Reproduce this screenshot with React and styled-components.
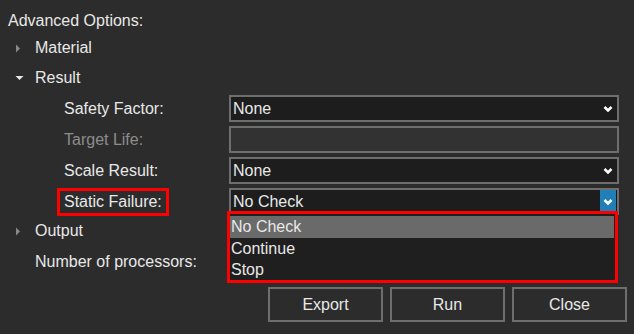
import React from 'react';
import styled, { createGlobalStyle } from 'styled-components';

const GlobalStyle = createGlobalStyle`
  html, body {
    margin: 0;
    background: #2c2c2c;
  }
  body {
    font-family: "Liberation Sans", Arial, sans-serif;
    font-size: 16px;
    color: #e8e8e8;
  }
`;

const Panel = styled.div`
  width: 634px;
  height: 334px;
  box-sizing: border-box;
  padding: 9px 0 0 8px;
  background: #2c2c2c;
  display: flex;
  flex-direction: column;
  overflow: hidden;
`;

const Heading = styled.div`
  height: 24px;
  line-height: 24px;
`;

const TreeRow = styled.div`
  height: ${p => p.$h || 30}px;
  margin-top: ${p => p.$gap || 0}px;
  display: flex;
  align-items: center;
`;

const Expander = styled.span`
  width: 20px;
  padding-left: 7px;
  display: flex;
  align-items: center;
`;

const TreeLabel = styled.span`
  line-height: 20px;
`;

const FieldRow = styled.div`
  height: 31px;
  display: grid;
  grid-template-columns: 221px 390px;
  align-items: center;
`;

const FieldLabel = styled.span`
  padding-left: 56px;
  color: ${p => (p.$disabled ? '#8c8c8c' : '#e8e8e8')};
  line-height: 22px;
`;

const Marked = styled.span`
  justify-self: start;
  margin-left: 49px;
  border: 3px solid #ff0000;
  padding: 0 4px;
  line-height: 22px;
`;

const ComboWrap = styled.div`
  position: relative;
  width: 390px;
  height: 27px;
`;

const Field = styled.div`
  height: 27px;
  box-sizing: border-box;
  border: 2px solid #6e6e6e;
  background: ${p => (p.$disabled ? '#323232' : '#1d1d1d')};
  display: flex;
  align-items: center;
  padding-left: 2px;
`;

const Value = styled.span`
  flex: 1;
  line-height: 20px;
`;

const Arrow = styled.span`
  width: 16px;
  align-self: stretch;
  display: flex;
  align-items: center;
  justify-content: center;
  margin-right: 1px;
  background: ${p => (p.$active ? '#1f7fb6' : 'transparent')};
`;

const List = styled.div`
  position: absolute;
  left: -2px;
  top: 23px;
  width: 391px;
  height: 72px;
  box-sizing: border-box;
  border: 3px solid #ff0000;
  background: #1f1f1f;
  padding-top: 2px;
  z-index: 2;
`;

const Option = styled.div`
  height: 21.5px;
  line-height: 21px;
  padding-left: 1px;
  margin-right: 1px;
  background: ${p => (p.$selected ? '#6a6a6a' : 'transparent')};
`;

const Buttons = styled.div`
  margin-top: 10px;
  display: flex;
  justify-content: flex-end;
  gap: 7px;
  padding-right: 7px;
`;

const Button = styled.button`
  width: 115px;
  height: 35px;
  box-sizing: border-box;
  border: 2px solid #6e6e6e;
  background: #2c2c2c;
  color: #e8e8e8;
  font-family: inherit;
  font-size: 16px;
`;

const Chevron = () => (
  <svg width="10" height="8" viewBox="0 0 10 8">
    <polyline points="1.5,2 5,5.5 8.5,2" fill="none" stroke="#ffffff" strokeWidth="2.6" />
  </svg>
);

const Right = () => (
  <svg width="6" height="9" viewBox="0 0 6 9">
    <polygon points="1,0.5 5,4.5 1,8.5" fill="#8a8a8a" />
  </svg>
);

const Down = () => (
  <svg width="9" height="6" viewBox="0 0 9 6">
    <polygon points="0.5,1 8.5,1 4.5,5" fill="#e8e8e8" />
  </svg>
);

const Combo = ({ value, active, options }) => (
  <ComboWrap>
    <Field>
      <Value>{value}</Value>
      <Arrow $active={active}><Chevron /></Arrow>
    </Field>
    {options && (
      <List>
        {options.map(o => (
          <Option key={o} $selected={o === value}>{o}</Option>
        ))}
      </List>
    )}
  </ComboWrap>
);

export default function App() {
  return (
    <Panel>
      <GlobalStyle />
      <Heading>Advanced Options:</Heading>
      <TreeRow><Expander><Right /></Expander><TreeLabel>Material</TreeLabel></TreeRow>
      <TreeRow><Expander><Down /></Expander><TreeLabel>Result</TreeLabel></TreeRow>
      <FieldRow>
        <FieldLabel>Safety Factor:</FieldLabel>
        <Combo value="None" />
      </FieldRow>
      <FieldRow>
        <FieldLabel $disabled>Target Life:</FieldLabel>
        <Field $disabled />
      </FieldRow>
      <FieldRow>
        <FieldLabel>Scale Result:</FieldLabel>
        <Combo value="None" />
      </FieldRow>
      <FieldRow>
        <Marked>Static Failure:</Marked>
        <Combo value="No Check" active options={['No Check', 'Continue', 'Stop']} />
      </FieldRow>
      <TreeRow $h={28}><Expander><Right /></Expander><TreeLabel>Output</TreeLabel></TreeRow>
      <TreeRow $gap={2}><Expander /><TreeLabel>Number of processors:</TreeLabel></TreeRow>
      <Buttons>
        <Button>Export</Button>
        <Button>Run</Button>
        <Button>Close</Button>
      </Buttons>
    </Panel>
  );
}
